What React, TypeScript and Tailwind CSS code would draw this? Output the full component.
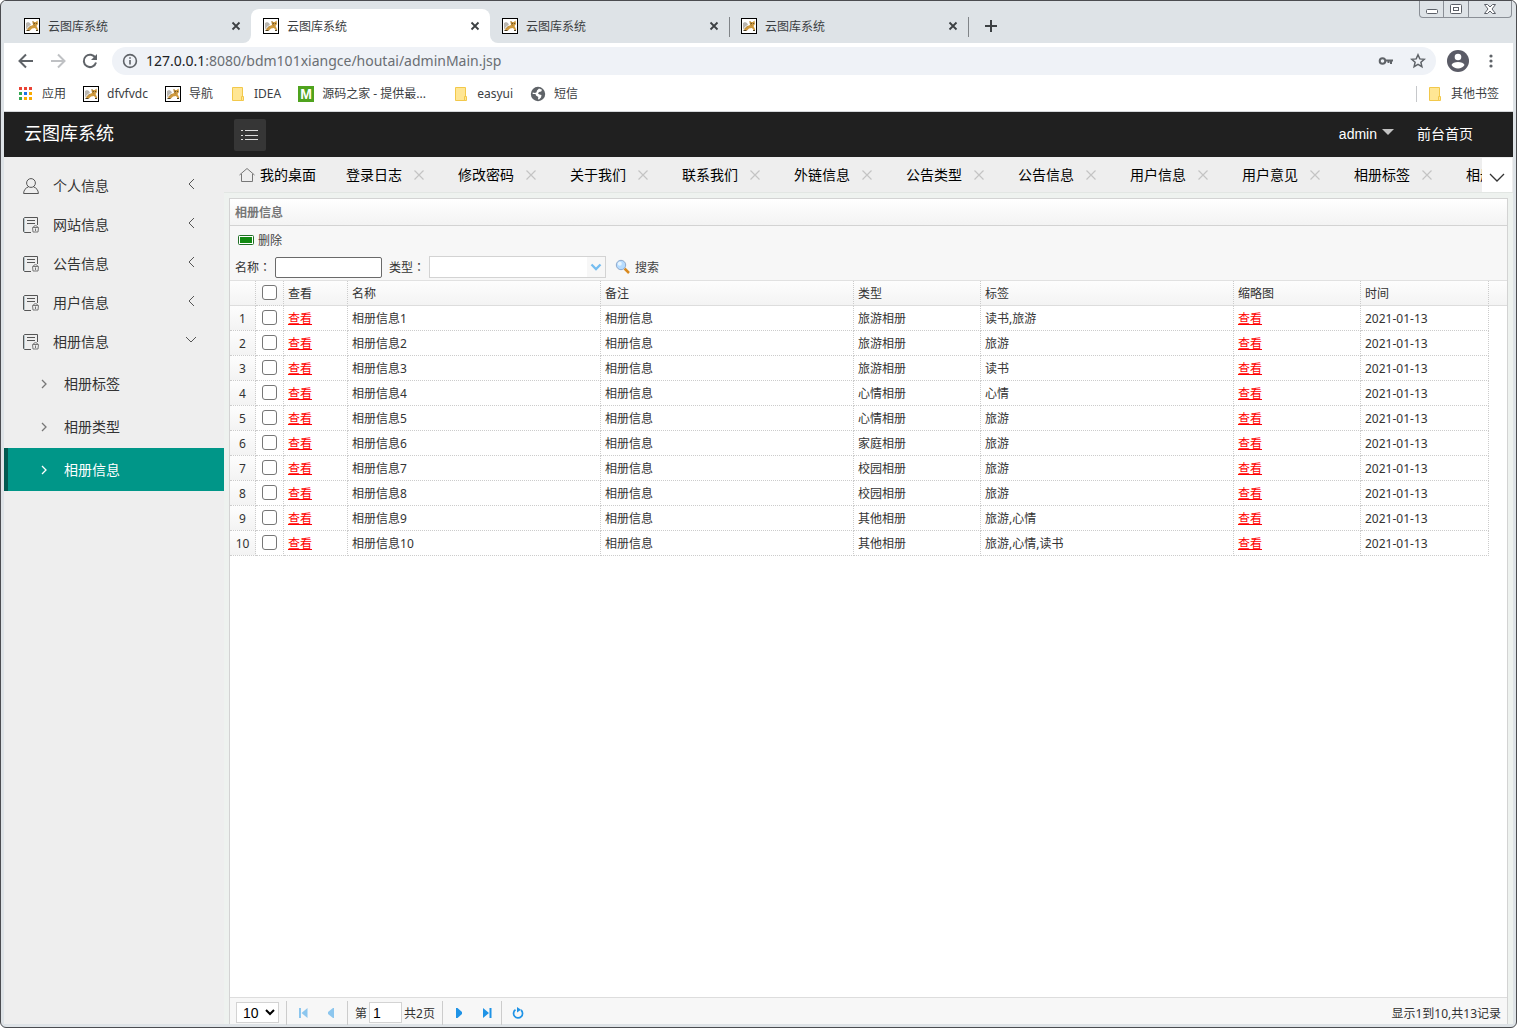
import type { ReactNode } from 'react'

const browserTabs = [
  { id: 1, title: '云图库系统' },
  { id: 2, title: '云图库系统', active: true },
  { id: 3, title: '云图库系统' },
  { id: 4, title: '云图库系统', divider: true },
]

const menu = ['个人信息', '网站信息', '公告信息', '用户信息', '相册信息']
const subMenu = ['相册标签', '相册类型', '相册信息']

const pageTabs = [
  '登录日志',
  '修改密码',
  '关于我们',
  '联系我们',
  '外链信息',
  '公告类型',
  '公告信息',
  '用户信息',
  '用户意见',
  '相册标签',
  '相册类型',
]

const albums = [
  { type: '旅游相册', tags: '读书,旅游' },
  { type: '旅游相册', tags: '旅游' },
  { type: '旅游相册', tags: '读书' },
  { type: '心情相册', tags: '心情' },
  { type: '心情相册', tags: '旅游' },
  { type: '家庭相册', tags: '旅游' },
  { type: '校园相册', tags: '旅游' },
  { type: '校园相册', tags: '旅游' },
  { type: '其他相册', tags: '旅游,心情' },
  { type: '其他相册', tags: '旅游,心情,读书' },
]

function TomcatIcon() {
  return (
    <svg width="16" height="16" viewBox="0 0 16 16" className="shrink-0">
      <rect x="0.5" y="0.5" width="15" height="15" fill="#fff" stroke="#000" />
      <path d="M2 5l2-1 2 1 1 2-2 1-2 2-1 2z" fill="#b9b6b0" />
      <path d="M8.500 3l1.300 1h2L13.500 2.500 14 6l-1.500 2 1 2 .8 2h-1.600L11 10 8 10.500 6 12.500H2.500L4 10.500 6.500 8 9 7z" fill="#cf9a3e" />
      <path d="M9 3l.5 3.500 1.500 1M6.500 8L3.500 11" fill="none" stroke="#9a7434" strokeWidth="0.800" />
      <path d="M10 5.500h.8M12 5.500h.8M2.500 12.500h3M12 12.500h2" stroke="#4f4326" />
    </svg>
  )
}

function FolderIcon() {
  return (
    <svg width="16" height="16" viewBox="0 0 16 16" className="shrink-0">
      <path d="M2.500 1.500h10v13h-10z" fill="#ffe694" stroke="#f2c84b" />
      <path d="M11.500 10.500h2v4h-2z" fill="#ffe694" stroke="#f2c84b" />
    </svg>
  )
}

function AppsIcon() {
  const colors = ['#ea4335', '#ea4335', '#ea4335', '#34a853', '#1a73e8', '#f9ab00', '#34a853', '#f9ab00', '#f9ab00']
  return (
    <svg width="16" height="16" viewBox="0 0 16 16" className="shrink-0">
      {colors.map((c, i) => (
        <rect key={i} x={1 + (i % 3) * 5} y={1 + Math.floor(i / 3) * 5} width="3" height="3" fill={c} />
      ))}
    </svg>
  )
}

function GlobeIcon() {
  return (
    <svg width="16" height="16" viewBox="0 0 16 16" className="shrink-0">
      <circle cx="8" cy="8" r="7.200" fill="#5f6368" />
      <path d="M9 2.500l3 1.200-.8 1.800L9 6 8 7.500l1.500 1 2 .5-.5 2.500L9 13.500l-1-.3.300-2.200L6 9.500 5.500 8H2.600l.2-1.500L5 7l1.500-.8.500-1.700z" fill="#fff" />
    </svg>
  )
}

function Bookmark({ icon, label, className = '' }: { icon: ReactNode; label: string; className?: string }) {
  return (
    <a href="#" className="flex items-center gap-2">
      {icon}
      <span className={`whitespace-nowrap ${className}`}>{label}</span>
    </a>
  )
}

function Chrome() {
  return (
    <header className="shrink-0 text-[#3c4043]">
      <div className="flex h-[42px] items-end bg-[#dee3e7]">
        <div className="flex h-[34px] flex-1 pl-2">
          {browserTabs.map((tab) => (
            <div
              key={tab.id}
              className={`relative flex w-[239px] items-center gap-2 pl-3 pr-[7px] text-xs ${
                tab.active ? 'rounded-t-lg bg-white' : ''
              }`}
            >
              {tab.active && (
                <>
                  <span className="absolute -left-2 bottom-0 size-2 bg-white before:absolute before:inset-0 before:rounded-br-lg before:bg-[#dee3e7]" />
                  <span className="absolute -right-2 bottom-0 size-2 bg-white before:absolute before:inset-0 before:rounded-bl-lg before:bg-[#dee3e7]" />
                </>
              )}
              {tab.divider && <span className="absolute left-0 top-2 h-5 w-px bg-[#808488]" />}
              <TomcatIcon />
              <span className="flex-1 pt-0.5">{tab.title}</span>
              <button aria-label="关闭标签页" className="flex size-4 items-center justify-center">
                <svg width="10" height="10" viewBox="0 0 10 10" fill="none" stroke="#3c4043" strokeWidth="1.800">
                  <path d="M1.500 1.500l7 7M8.500 1.500l-7 7" />
                </svg>
              </button>
            </div>
          ))}
          <button aria-label="新标签页" className="relative flex w-[46px] items-center justify-center">
            <span className="absolute left-0 top-2 h-5 w-px bg-[#808488]" />
            <svg width="12" height="12" viewBox="0 0 12 12" stroke="#3c4043" strokeWidth="2">
              <path d="M6 0v12M0 6h12" />
            </svg>
          </button>
        </div>
        <div className="mr-px flex h-[17px] self-start rounded-b border border-t-0 border-[#8a8f96]">
          <button aria-label="最小化" className="flex w-6 items-center justify-center border-r border-[#8a8f96]">
            <svg width="12" height="12" viewBox="0 0 12 12" fill="#fff" stroke="#5c6068">
              <rect x="0.5" y="6.500" width="11" height="4" rx="1" />
            </svg>
          </button>
          <button aria-label="最大化" className="flex w-[25px] items-center justify-center border-r border-[#8a8f96]">
            <svg width="12" height="12" viewBox="0 0 12 12" fill="#fff" stroke="#5c6068">
              <rect x="0.5" y="1.500" width="11" height="9" rx="1" />
              <rect x="3.500" y="4.500" width="5" height="3" />
            </svg>
          </button>
          <button aria-label="关闭" className="flex w-[42px] items-center justify-center">
            <svg width="12" height="12" viewBox="0 0 12 12" fill="#fff" stroke="#5c6068">
              <path d="M.5 1.500h3L6 4l2.500-2.500h3L8 6l3.500 4.500h-3L6 8l-2.500 2.500h-3L4 6z" />
            </svg>
          </button>
        </div>
      </div>

      <div className="flex h-9 items-center bg-white">
        <div className="flex w-[108px] items-center gap-4 pl-3.5">
          <button aria-label="后退">
            <svg width="16" height="16" viewBox="0 0 16 16" fill="none" stroke="#5f6368" strokeWidth="2">
              <path d="M15 8H2M8 1.500L1.500 8 8 14.500" />
            </svg>
          </button>
          <button aria-label="前进">
            <svg width="16" height="16" viewBox="0 0 16 16" fill="none" stroke="#bfc1c4" strokeWidth="2">
              <path d="M1 8h13M8 1.500L14.500 8 8 14.500" />
            </svg>
          </button>
          <button aria-label="重新加载">
            <svg width="16" height="16" viewBox="0 0 16 16" fill="none" stroke="#5f6368" strokeWidth="2">
              <path d="M13.500 5A6.200 6.200 0 1 0 14 9.500" />
              <path d="M15 1v6H9z" fill="#5f6368" stroke="none" />
            </svg>
          </button>
        </div>
        <div className="flex h-7 flex-1 items-center gap-2 rounded-full bg-[#eff2f7] px-2.5">
          <svg width="16" height="16" viewBox="0 0 16 16" fill="none" stroke="#5f6368" strokeWidth="1.600">
            <circle cx="8" cy="8" r="6.400" />
            <path d="M8 7v4.500M8 4.200v1.600" />
          </svg>
          <p className="flex-1 text-sm text-[#6a6e73]">
            <span className="text-[#202124]">127.0.0.1</span>:8080/bdm101xiangce/houtai/adminMain.jsp
          </p>
          <button aria-label="密码" className="mr-2">
            <svg width="16" height="16" viewBox="0 0 16 16" fill="none" stroke="#5f6368" strokeWidth="2">
              <circle cx="4.500" cy="8" r="2.800" />
              <path d="M7.500 7.500H15M13 8v3M10.500 8v2" />
            </svg>
          </button>
          <button aria-label="收藏">
            <svg width="16" height="16" viewBox="0 0 16 16" fill="none" stroke="#5f6368" strokeWidth="1.500">
              <path d="M8 1.800l1.800 4.100 4.500.4-3.400 3 1 4.400L8 11.400l-3.900 2.300 1-4.400-3.400-3 4.500-.4z" />
            </svg>
          </button>
        </div>
        <button aria-label="用户" className="ml-[11px]">
          <svg width="22" height="22" viewBox="0 0 22 22">
            <circle cx="11" cy="11" r="11" fill="#5a5b66" />
            <circle cx="11" cy="7" r="3.300" fill="#fff" />
            <path d="M4.500 15c1-4 12-4 13 0-2.500 4.500-10.500 4.500-13 0z" fill="#fff" />
          </svg>
        </button>
        <button aria-label="更多" className="mx-3.5">
          <svg width="16" height="16" viewBox="0 0 16 16" fill="#5f6368">
            <circle cx="8" cy="3" r="1.600" />
            <circle cx="8" cy="8" r="1.600" />
            <circle cx="8" cy="13" r="1.600" />
          </svg>
        </button>
      </div>

      <nav className="flex h-[33px] items-center gap-[17px] border-b border-[#d5d7da] bg-white px-3.5 pb-[3px] text-xs">
        <Bookmark icon={<AppsIcon />} label="应用" />
        <Bookmark icon={<TomcatIcon />} label="dfvfvdc" />
        <Bookmark icon={<TomcatIcon />} label="导航" />
        <Bookmark icon={<FolderIcon />} label="IDEA" />
        <Bookmark
          icon={
            <span className="flex size-4 items-center justify-center bg-[#4fa31e] font-['Liberation_Sans'] text-sm font-bold leading-4 text-white">
              M
            </span>
          }
          label="源码之家 - 提供最..."
          className="w-[114px]"
        />
        <Bookmark icon={<FolderIcon />} label="easyui" />
        <Bookmark icon={<GlobeIcon />} label="短信" />
        <div className="ml-auto flex items-center gap-2.5">
          <span className="h-4 w-px bg-[#c6c8cb]" />
          <Bookmark icon={<FolderIcon />} label="其他书签" />
        </div>
      </nav>
    </header>
  )
}

function UserIcon() {
  return (
    <svg width="16" height="16" viewBox="0 0 16 16" fill="none" stroke="#555">
      <circle cx="8" cy="5" r="4.400" />
      <path d="M5.500 8.800C2.500 10 .8 12 .6 15.500h14.800c-.2-3.500-1.900-5.500-4.900-6.700" />
    </svg>
  )
}

function FileIcon() {
  return (
    <svg width="16" height="16" viewBox="0 0 16 16" fill="none" stroke="#555">
      <path d="M14.500 8V.5h-13l-1 1v13l1 1H8" />
      <path d="M1.500 1v14" stroke="#b5c6cc" />
      <path d="M4 3.500h8M4 6.500h8" />
      <path d="M9.500 10.500h6l-.5 4.500h-5zM10.500 10c0-1.800 4-1.800 4 0M12.500 11.500v2.500" stroke="#777" />
    </svg>
  )
}

function Sidebar() {
  return (
    <aside className="w-[220px] shrink-0 bg-[#eee] pt-2.5 text-sm text-[#333]">
      <ul>
        {menu.map((item, i) => (
          <li key={item}>
            <a href="#" className="flex h-[39px] items-center pb-px pl-[19px] pr-[26px]">
              {i === 0 ? <UserIcon /> : <FileIcon />}
              <span className="ml-3.5 flex-1">{item}</span>
              <svg width="14" height="14" viewBox="0 0 14 14" fill="none" stroke="#555" className="mb-1">
                <path d={i === 4 ? 'M2 4l5 5 5-5' : 'M10 2L5 7l5 5'} />
              </svg>
            </a>
          </li>
        ))}
      </ul>
      <ul>
        {subMenu.map((item) => {
          const active = item === '相册信息'
          return (
            <li key={item}>
              <a
                href="#"
                className={`flex h-[43px] items-center gap-3.5 border-l-4 pl-[30px] ${
                  active ? 'border-[#005a50] bg-[#009688] text-white' : 'border-transparent'
                }`}
              >
                <svg
                  width="12"
                  height="12"
                  viewBox="0 0 12 12"
                  fill="none"
                  stroke="currentColor"
                  strokeWidth="1.300"
                  className={active ? '' : 'text-[#777]'}
                >
                  <path d="M4 2l4 4-4 4" />
                </svg>
                {item}
              </a>
            </li>
          )
        })}
      </ul>
    </aside>
  )
}

function PageTabs() {
  return (
    <div className="flex h-9 shrink-0 items-center border-b border-[#e2e6e3] bg-[#eee] text-sm text-black">
      <div className="flex flex-1 overflow-hidden whitespace-nowrap">
        <a href="#" className="flex items-center gap-[5px] px-[15px]">
          <svg width="16" height="16" viewBox="0 0 16 16" fill="none" stroke="#777">
            <path d="M.5 8L8 1.500 15.500 8M2.500 7v7.500h11V7" />
          </svg>
          我的桌面
        </a>
        {pageTabs.map((tab) => (
          <div key={tab} className="flex w-28 shrink-0 items-center gap-2.5 pl-[15px]">
            <a href="#">{tab}</a>
            <button aria-label={`关闭${tab}`}>
              <svg width="14" height="14" viewBox="0 0 14 14" stroke="#c4c4c4" strokeWidth="1.200">
                <path d="M2.500 2.500l9 9M11.500 2.500l-9 9" />
              </svg>
            </button>
          </div>
        ))}
      </div>
      <button aria-label="更多标签" className="mr-px flex h-[34px] w-[30px] items-center justify-center bg-white">
        <svg width="16" height="16" viewBox="0 0 16 16" fill="none" stroke="#333" strokeWidth="1.300" className="mt-1">
          <path d="M1 5l7 7 7-7" />
        </svg>
      </button>
    </div>
  )
}

function FieldLabel({ htmlFor, text }: { htmlFor: string; text: string }) {
  return (
    <label htmlFor={htmlFor} className="pt-px">
      {text}
      <span className="font-['Noto_Sans_CJK_TC',sans-serif]">：</span>
    </label>
  )
}

function Toolbar() {
  return (
    <div className="border-b border-[#e1e1e1] bg-[#f7f7f7] px-[5px] text-[#333]">
      <div className="flex h-7 items-center">
        <button className="ml-[3px] flex items-center gap-1 text-[#444]">
          <svg width="16" height="10" viewBox="0 0 16 10">
            <rect x="0.500" y="0.500" width="15" height="9" rx="1" fill="#fff" stroke="#1f6f25" />
            <rect x="2" y="2" width="12" height="6" fill="#128a12" />
          </svg>
          <span className="pt-0.5">删除</span>
        </button>
      </div>
      <div className="flex h-[26px] items-center">
        <FieldLabel htmlFor="name" text="名称" />
        <input
          id="name"
          type="text"
          className="ml-1 mr-[7px] h-[21px] w-[107px] rounded-xs border border-[#6a6a6a] bg-white px-1"
        />
        <FieldLabel htmlFor="type" text="类型" />
        <div className="relative ml-1">
          <select id="type" className="block h-[22px] w-[177px] appearance-none border border-[#d3d3d3] bg-white px-1">
            <option></option>
            <option>旅游相册</option>
          </select>
          <span className="pointer-events-none absolute right-px top-px flex h-5 w-[18px] items-center justify-center bg-[#f7f7f7]">
            <svg width="12" height="8" viewBox="0 0 12 8" fill="none" stroke="#75bdf0" strokeWidth="2.300">
              <path d="M1.500 1.500L6 6l4.500-4.500" />
            </svg>
          </span>
        </div>
        <button className="ml-[9px] flex items-center gap-1 text-[#444]">
          <svg width="16" height="16" viewBox="0 0 16 16">
            <path d="M9.500 9.500l4.500 4.500" stroke="#d98a20" strokeWidth="2.500" />
            <circle cx="6" cy="6" r="4.700" fill="#b6dcff" stroke="#8fa9cc" />
            <circle cx="4.800" cy="4.800" r="2" fill="#e8f5ff" />
          </svg>
          <span className="pt-px">搜索</span>
        </button>
      </div>
    </div>
  )
}

const th =
  'h-[25px] border-b border-r border-b-[#ddd] border-r-[#ccc] [border-right-style:dotted] px-1 pt-0.5 text-left font-normal'
const td = 'h-[25px] border-b border-r border-dotted border-[#ccc] px-1 pt-0.5'
const checkCell = 'h-[25px] border-b border-r border-dotted border-[#ccc] px-1 pb-px'
const check = 'block size-[15px] mx-auto appearance-none rounded-[3px] border border-[#767676] bg-white'

function AlbumTable() {
  return (
    <table className="w-full table-fixed border-separate border-spacing-0 text-xs text-[#333]">
      <colgroup>
        <col className="w-[26px]" />
        <col className="w-7" />
        <col className="w-16" />
        <col className="w-[253px]" />
        <col className="w-[253px]" />
        <col className="w-[127px]" />
        <col className="w-[253px]" />
        <col className="w-[127px]" />
        <col />
        <col className="w-[18px]" />
      </colgroup>
      <thead>
        <tr className="bg-linear-to-b from-[#fdfdfd] to-[#f3f3f3]">
          <th className={th}></th>
          <th className={checkCell}>
            <input type="checkbox" aria-label="全选" className={check} />
          </th>
          <th className={th}>查看</th>
          <th className={th}>名称</th>
          <th className={th}>备注</th>
          <th className={th}>类型</th>
          <th className={th}>标签</th>
          <th className={th}>缩略图</th>
          <th className={th}>时间</th>
          <th className="border-b border-[#ddd]"></th>
        </tr>
      </thead>
      <tbody>
        {albums.map((album, i) => (
          <tr key={i}>
            <td className={`${td} bg-linear-to-b from-[#fdfdfd] to-[#f3f3f3] text-center`}>{i + 1}</td>
            <td className={checkCell}>
              <input type="checkbox" aria-label={`选择相册信息${i + 1}`} className={check} />
            </td>
            <td className={td}>
              <a href="#" className="text-[#f00] underline">
                查看
              </a>
            </td>
            <td className={td}>相册信息{i + 1}</td>
            <td className={td}>相册信息</td>
            <td className={td}>{album.type}</td>
            <td className={td}>{album.tags}</td>
            <td className={td}>
              <a href="#" className="text-[#f00] underline">
                查看
              </a>
            </td>
            <td className={td}>2021-01-13</td>
            <td></td>
          </tr>
        ))}
      </tbody>
    </table>
  )
}

function PagerButton({ label, path, muted }: { label: string; path: string; muted?: boolean }) {
  return (
    <button aria-label={label} className="flex w-7 justify-center">
      <svg width="12" height="12" viewBox="0 0 12 12" fill={muted ? '#8cc6ee' : '#1f93e6'}>
        <path d={path} />
      </svg>
    </button>
  )
}

function Pager() {
  return (
    <div className="flex h-[27px] shrink-0 items-center border-t border-[#ddd] bg-[#f7f7f7] px-1.5 pt-[3px] text-[#333]">
      <div className="relative">
        <select
          aria-label="每页记录数"
          className="block h-[21px] w-[43px] appearance-none border border-[#d3d3d3] bg-white pl-1.5 font-['Liberation_Sans'] text-sm leading-[18px] text-black"
        >
          <option>10</option>
          <option>20</option>
        </select>
        <svg
          width="10"
          height="7"
          viewBox="0 0 10 7"
          fill="none"
          stroke="#000"
          strokeWidth="2"
          className="pointer-events-none absolute right-1 top-[7px]"
        >
          <path d="M1 1l4 4 4-4" />
        </svg>
      </div>
      <span className="ml-[7px] mr-0.5 h-6 w-px bg-[#ccc]" />
      <PagerButton label="首页" path="M2 1h2v10H2zM10.500 1v10L4.500 6z" muted />
      <PagerButton label="上一页" path="M9 1v10H8L3 7V5l5-4z" muted />
      <span className="mx-0.5 h-6 w-px bg-[#ccc]" />
      <label htmlFor="page" className="ml-[5px] pt-0.5">
        第
      </label>
      <input
        id="page"
        type="text"
        defaultValue="1"
        className="mx-0.5 h-[21px] w-[33px] border border-[#d3d3d3] bg-white px-[3px] font-['Liberation_Sans'] text-sm text-black"
      />
      <span className="pt-0.5">共2页</span>
      <span className="ml-[7px] mr-0.5 h-6 w-px bg-[#ccc]" />
      <PagerButton label="下一页" path="M3 1v10h1.500L9 7V5L4.500 1z" />
      <PagerButton label="末页" path="M8.500 1h2v10h-2zM2 1v10l6-5z" />
      <span className="mr-0.5 h-6 w-px bg-[#ccc]" />
      <button aria-label="刷新" className="flex w-7 justify-center">
        <svg width="12" height="12" viewBox="0 0 12 12" fill="none" stroke="#1f93e6" strokeWidth="1.700">
          <path d="M9 3a4.500 4.500 0 1 1-5.500-.3" />
          <path d="M5 0l4 2.700L5 5.500z" fill="#1f93e6" stroke="none" />
        </svg>
      </button>
      <span className="ml-auto pt-0.5">显示1到10,共13记录</span>
    </div>
  )
}

export default function App() {
  return (
    <div className="flex h-screen flex-col rounded-md border border-[#4b4c50] bg-[#dee3e7] px-[3px] pb-[3px] font-['Noto_Sans','Noto_Sans_CJK_SC',sans-serif]">
      <Chrome />
      <div className="flex h-[45px] shrink-0 items-center bg-[#202020] pl-5 pr-10 text-sm text-white">
        <h1 className="w-[210px] pb-1 text-lg">云图库系统</h1>
        <button aria-label="收起菜单" className="flex size-8 items-center justify-center rounded-xs bg-[#363636]">
          <svg width="18" height="12" viewBox="0 0 18 12" stroke="#ddd">
            <path d="M0 1.500h2M4 1.500h13M0 6.500h2M4 6.500h13M0 10.500h2M4 10.500h13" />
          </svg>
        </button>
        <button className="ml-auto flex items-center gap-[5px] pb-0.5 font-['Liberation_Sans']">
          admin
          <svg width="12" height="6" viewBox="0 0 12 6" fill="#c2c2c2" className="mb-1">
            <path d="M0 0h12L6 6z" />
          </svg>
        </button>
        <a href="#" className="ml-[23px] pb-0.5">
          前台首页
        </a>
      </div>
      <div className="flex min-h-0 flex-1">
        <Sidebar />
        <main className="flex min-w-0 flex-1 flex-col bg-[#eef2ef]">
          <PageTabs />
          <section className="mx-[5px] mt-[5px] flex min-h-0 flex-1 flex-col border border-b-0 border-[#d3d3d3] bg-white text-xs">
            <h2 className="flex h-[27px] shrink-0 items-center border-b border-[#d3d3d3] bg-linear-to-b from-white to-[#f3f3f3] pl-[5px] pt-0.5 font-bold text-[#777]">
              相册信息
            </h2>
            <Toolbar />
            <div className="min-h-0 flex-1 overflow-hidden">
              <AlbumTable />
            </div>
            <Pager />
          </section>
        </main>
      </div>
    </div>
  )
}
